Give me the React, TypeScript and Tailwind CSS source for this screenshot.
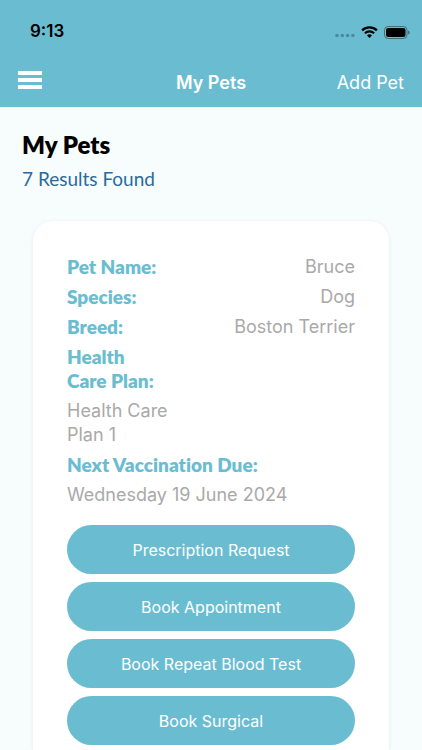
const pet = {
  name: 'Bruce',
  species: 'Dog',
  breed: 'Boston Terrier',
  plan: 'Health Care Plan 1',
  vaccination: 'Wednesday 19 June 2024',
};

const details = [
  { label: 'Pet Name:', value: pet.name },
  { label: 'Species:', value: pet.species },
  { label: 'Breed:', value: pet.breed },
];

const actions = ['Prescription Request', 'Book Appointment', 'Book Repeat Blood Test', 'Book Surgical'];

const labelStyle =
  "font-['Lato','Open_Sans',sans-serif] text-[19px] leading-6 font-extrabold text-[#6abdd1] [font-variant-ligatures:none]";

function StatusBar() {
  return (
    <div className="flex h-[62px] items-center justify-between pt-0.5 pl-[30px] pr-3">
      <span className="text-[17px] font-semibold text-black">9:13</span>
      <div className="flex items-center">
        {/* No signal */}
        <svg width="20" height="12" viewBox="0 0 20 12" fill="#4b8b9b" aria-hidden="true">
          <circle cx="2" cy="9.5" r="1.8" />
          <circle cx="7.3" cy="9.5" r="1.8" />
          <circle cx="12.6" cy="9.5" r="1.8" />
          <circle cx="17.9" cy="9.5" r="1.8" />
        </svg>
        {/* Wifi */}
        <svg className="ml-1.5" width="17" height="12" viewBox="0 0 17 12" aria-hidden="true">
          <path d="M1.1 4.3a10.7 10.7 0 0 1 14.8 0" fill="none" stroke="#000" strokeWidth="2.4" />
          <path d="M3.9 7.2a6.7 6.7 0 0 1 9.2 0" fill="none" stroke="#000" strokeWidth="2.2" />
          <path d="M8.5 12 6 9.4a3.7 3.7 0 0 1 5 0z" />
        </svg>
        {/* Battery */}
        <svg className="ml-1.5" width="26" height="13" viewBox="0 0 26 13" aria-hidden="true">
          <rect x="0.5" y="0.5" width="22.5" height="12" rx="3.6" fill="none" stroke="#000" strokeOpacity="0.4" />
          <rect x="2" y="2" width="19.5" height="9" rx="2.2" />
          <path d="M24.2 4.4v4.2a2.3 2.3 0 0 0 0-4.2z" fillOpacity="0.5" />
        </svg>
      </div>
    </div>
  );
}

function NavBar() {
  return (
    <nav className="grid h-[45px] grid-cols-[1fr_auto_1fr] items-center px-[18px] pb-1 text-lg text-white">
      <button type="button" aria-label="Menu" className="justify-self-start pb-1.5">
        <svg width="24" height="18" viewBox="0 0 24 18" fill="currentColor" aria-hidden="true">
          <path d="M0 0h24v4H0zM0 7h24v4H0zM0 14h24v4H0z" />
        </svg>
      </button>
      <span className="font-semibold">My Pets</span>
      <button type="button" className="justify-self-end">
        Add Pet
      </button>
    </nav>
  );
}

function PetCard() {
  return (
    <article className="mx-[33px] mt-7 flex-1 rounded-t-[20px] bg-white px-[34px] pt-[34px] pb-1 shadow-[0_1px_4px_rgba(0,0,0,0.08)]">
      <dl className="flex flex-col gap-1.5 text-lg leading-6 text-[#a9a9a9]">
        {details.map((item) => (
          <div key={item.label} className="flex justify-between">
            <dt className={labelStyle}>{item.label}</dt>
            <dd>{item.value}</dd>
          </div>
        ))}
        <div className="flex w-[110px] flex-col gap-1.5">
          <dt className={labelStyle}>
            Health
            <br />
            Care Plan:
          </dt>
          <dd>{pet.plan}</dd>
        </div>
        <div className="flex flex-col gap-1.5">
          <dt className={labelStyle}>Next Vaccination Due:</dt>
          <dd>{pet.vaccination}</dd>
        </div>
      </dl>

      <div className="mt-[18px] flex flex-col gap-2">
        {actions.map((action) => (
          <button key={action} type="button" className="h-[49px] rounded-full bg-[#6abdd1] text-base text-white">
            {action}
          </button>
        ))}
      </div>
    </article>
  );
}

export default function App() {
  return (
    <div className="flex min-h-screen flex-col bg-[#f7fdfd] font-['Inter',sans-serif]">
      <header className="bg-[#6abdd1]">
        <StatusBar />
        <NavBar />
      </header>
      <main className="flex flex-1 flex-col">
        <div className="px-[22px] pt-[22px] font-['Lato','Open_Sans',sans-serif]">
          <h1 className="text-2xl leading-8 font-extrabold text-black">My Pets</h1>
          <p className="mt-1 text-[19px] leading-7 text-[#2a6a9e]">7 Results Found</p>
        </div>
        <PetCard />
      </main>
    </div>
  );
}
